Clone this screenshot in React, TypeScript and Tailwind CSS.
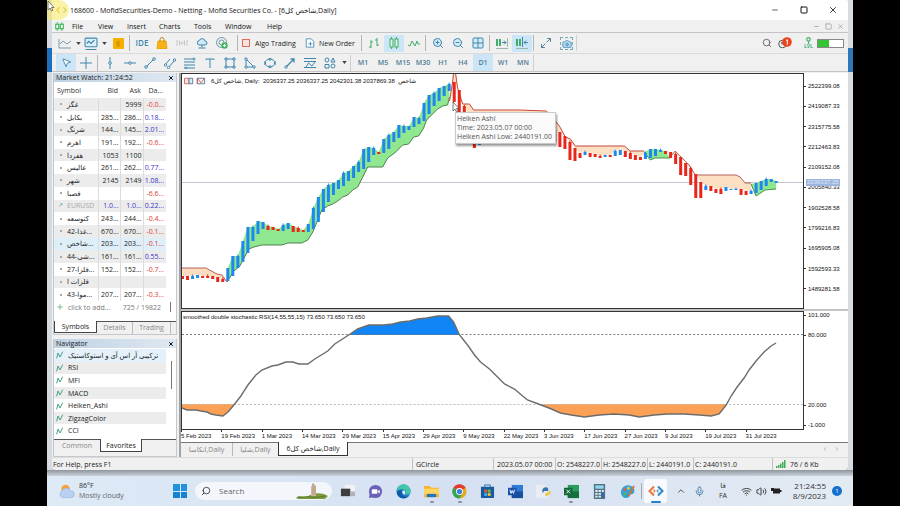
import React from "react";
import {
  Search, Minus, Square, X, ZoomIn, ZoomOut, Maximize2, Camera, Cloud,
  MousePointer2, ChevronUp, ChevronLeft, ChevronRight, Mic, Wifi, Volume2, Plus,
} from "lucide-react";

const BLUE = "#3f86ad";
const GREEN = "#3fae6a";

type Candle = [number, number, "b" | "r"];

const candles: Candle[] = [
  [276, 279, "r"], [276, 280, "r"], [276, 279, "b"], [275, 278, "b"], [276, 278, "r"],
  [276, 278, "r"], [276, 279, "r"], [277, 282, "r"], [279, 282, "r"], [268, 281, "b"],
  [256, 276, "b"], [256, 268, "b"], [241, 262, "b"], [227, 253, "b"], [227, 241, "b"],
  [221, 234, "b"], [222, 229, "b"], [226, 230, "r"], [227, 230, "r"], [229, 231, "r"],
  [225, 231, "b"], [223, 229, "b"], [226, 232, "r"], [228, 232, "r"], [230, 232, "r"],
  [224, 232, "b"], [208, 229, "b"], [197, 222, "b"], [189, 212, "b"], [185, 202, "b"],
  [183, 195, "b"], [180, 189, "b"], [173, 186, "b"], [171, 181, "b"], [166, 178, "b"],
  [162, 172, "b"], [149, 169, "b"], [147, 162, "b"], [148, 155, "b"], [152, 154, "r"],
  [139, 153, "b"], [135, 149, "b"], [132, 142, "b"], [125, 138, "b"], [126, 133, "b"],
  [126, 130, "b"], [117, 127, "b"], [118, 124, "b"], [103, 121, "b"], [95, 114, "b"],
  [93, 106, "b"], [88, 101, "b"], [86, 96, "b"], [84, 91, "b"], [82, 102, "r"],
  [90, 116, "r"], [106, 128, "r"], [116, 138, "r"], [124, 148, "r"], [138, 145, "b"],
  [132, 140, "b"], [130, 138, "b"], [128, 136, "b"], [126, 134, "b"], [125, 132, "b"],
  [124, 130, "b"], [123, 129, "b"], [122, 128, "b"], [122, 127, "b"], [122, 126, "r"],
  [123, 128, "r"], [124, 130, "r"], [126, 132, "r"], [128, 136, "r"], [130, 142, "r"],
  [132, 147, "r"], [136, 149, "r"], [142, 160, "r"], [148, 161, "r"], [153, 158, "r"],
  [152, 155, "b"], [153, 157, "r"], [154, 157, "r"], [156, 158, "r"], [155, 157, "b"],
  [155, 157, "r"], [151, 156, "b"], [150, 155, "b"], [151, 157, "r"], [153, 159, "r"],
  [155, 160, "r"], [157, 160, "r"], [153, 159, "b"], [149, 158, "b"], [149, 156, "b"],
  [150, 152, "b"], [151, 154, "r"], [152, 158, "r"], [154, 164, "r"], [157, 175, "r"],
  [163, 176, "r"], [168, 185, "r"], [174, 198, "r"], [182, 198, "r"], [186, 190, "b"],
  [186, 191, "r"], [189, 193, "r"], [189, 194, "r"], [187, 191, "b"], [189, 190, "b"],
  [189, 190, "b"], [189, 195, "r"], [191, 195, "r"], [191, 194, "b"], [183, 193, "b"],
  [181, 190, "b"], [179, 186, "b"], [179, 182, "b"], [181, 183, "b"],
];

const cx = (i: number) => 182.5 + i * 5.04;

const bands = [
  { from: 0, to: 8, fill: "#fbdcc0", stroke: "#b5605a", line: "182,268 206,268 217,274 222,275 227,282" },
  {
    from: 9, to: 53, fill: "#8fe88f", stroke: "#4d7f4d",
    line: "227,282 234,271 240,266 249,249 254,247 262,245 282,245 288,243 302,243 308,240 313,232 318,220 322,210 328,206 333,204 338,201 343,197 348,195 353,190 358,187 363,177 368,167 383,167 388,158 395,153 403,145 409,144 414,137 419,136 424,128 427,120 433,114 438,109 443,106 448,105 450,97",
  },
  {
    from: 54, to: 92, fill: "#fde0c4", stroke: "#c4473c",
    line: "450,101 453,82 454,73 456,73 458,88 463,104 470,104 474,110 520,110 547,111 556,121 560,126 566,137 571,139 576,146 625,146 631,151 645,151",
  },
  { from: 93, to: 96, fill: "#8fe88f", stroke: "#4d8f4d", line: "645,152 651,160 656,158 671,158" },
  {
    from: 97, to: 113, fill: "#fde0c4", stroke: "#b5605a",
    line: "671,157 676,151 684,159 690,165 696,175 737,175 741,177 746,183 752,183",
  },
  { from: 114, to: 118, fill: "#8fe88f", stroke: "#4d8f4d", line: "752,184 757,196 766,190 777,189" },
];

const candleEdge = (from: number, to: number) =>
  candles
    .slice(from, to + 1)
    .map((c, k) => `${cx(from + k)},${c[0]}`)
    .reverse()
    .join(" ");

function PriceChart() {
  return (
    <svg className="block h-full w-full" viewBox="182 74 622 234" preserveAspectRatio="none" role="img" aria-label="Heiken Ashi price chart">
      <path d="M182 182.5H804" stroke="#c3c6cf" strokeWidth="1" />
      {bands.map((b, i) => (
        <g key={i}>
          <polygon points={`${b.line} ${candleEdge(b.from, b.to)}`} fill={b.fill} />
          <polyline points={b.line} fill="none" stroke={b.stroke} strokeWidth="1" />
        </g>
      ))}
      {candles.map(([top, bottom, c], i) => (
        <g key={i} fill={c === "b" ? "#1e88ee" : "#e8261a"}>
          <rect x={cx(i) - 1.5} y={top} width="3" height={bottom - top} />
          {i % 3 === 2 && <rect x={cx(i) - 0.5} y={top - 1.5} width="1" height="2" />}
        </g>
      ))}
    </svg>
  );
}

const rsi =
  "182,408 187,410 196,410 201,411 207,412 211,414 216,415 223,416 228,412 234,405 241,396 248,385 256,375 262,370 272,366 278,365 286,362 293,362 299,364 308,364 315,359 328,351 335,344 349,335 358,329 369,325 384,325 393,324 401,322 410,321 418,319 427,318 438,316 449,316 454,322 460,335 468,345 475,355 481,362 490,369 497,376 505,384 515,389 522,395 528,400 539,404 552,409 561,413 572,415 585,417 600,415 615,414 630,415 640,417 655,415 668,414 685,414 700,415 712,416 720,414 727,405 732,396 738,387 745,378 750,370 757,361 765,352 772,346 777,343";

function RsiChart() {
  return (
    <svg className="block h-full w-full" viewBox="182 312 622 117" preserveAspectRatio="none" role="img" aria-label="Smoothed double stochastic RSI">
      <defs>
        <clipPath id="over"><rect x="182" y="312" width="622" height="23" /></clipPath>
        <clipPath id="under"><rect x="182" y="404" width="622" height="20" /></clipPath>
      </defs>
      <polygon points={`182,335 182,429 ${rsi} 777,429 182,429`} fill="#1185f5" clipPath="url(#over)" />
      <polygon points={`182,404 ${rsi} 777,320 182,320`} fill="#fba055" clipPath="url(#under)" />
      <path d="M182 334.5H804" stroke="#777" strokeWidth="1" strokeDasharray="2 2" />
      <path d="M182 404.5H804" stroke="#bbb" strokeWidth="1" strokeDasharray="2 2" />
      <polyline points={rsi} fill="none" stroke="#6c6c6c" strokeWidth="1.4" />
    </svg>
  );
}

function Glyph({ children, color = BLUE, size = "h-3 w-3" }: { children: React.ReactNode; color?: string; size?: string }) {
  return (
    <svg viewBox="0 0 12 12" className={`shrink-0 ${size}`} fill="none" stroke={color} strokeWidth="1" aria-hidden="true">
      {children}
    </svg>
  );
}

function Tool({ label, active, children }: { label: string; active?: boolean; children: React.ReactNode }) {
  return (
    <button aria-label={label} className={`flex h-[17px] w-5 shrink-0 items-center justify-center ${active ? "bg-[#cde6f7]" : ""}`}>
      {children}
    </button>
  );
}

const Sep = () => <span className="mx-[1px] h-4 w-[2px] shrink-0 border-l border-[#b4b4b4]" />;
const Caret = () => <svg viewBox="0 0 6 4" className="h-[3px] w-[5px] shrink-0" aria-hidden="true"><path d="M0 0h6L3 4z" fill="#444" /></svg>;

function MainToolbar() {
  return (
    <div className="flex h-5 items-center pl-1">
      <button aria-label="Chart type" className="flex h-4 w-[26px] items-center justify-center gap-1">
        <Glyph size="h-3 w-[14px]"><path d="M0 2v9h12M1 7l3-3 4 3 4-3" stroke="#7c99a8" /></Glyph><Caret />
      </button>
      <button aria-label="Templates" className="flex h-4 w-[26px] items-center justify-center gap-1">
        <Glyph size="h-[13px] w-[14px]"><rect x="0.5" y="1" width="11" height="8" rx="1" fill="#dceefa" /><path d="M2 6l2-2 2 2 3-3M1 11.500h10" /></Glyph><Caret />
      </button>
      <button aria-label="Market" className="flex h-4 w-5 items-center justify-center">
        <span className="flex h-[11px] w-[11px] items-center justify-center rounded-[1px] bg-[#f5b100] text-[8px] leading-none text-[#c07a00]">$</span>
      </button>
      <Sep />
      <button className="h-4 w-5 text-[8px] font-semibold leading-none text-[#3f86ad]">IDE</button>
      <Tool label="Store">
        <Glyph><path d="M2 4h8l1 7.500H1z" fill="#f6b21a" stroke="#f0a500" /><path d="M4 5V2.500a2 2 0 0 1 4 0V5" stroke="#c98a1b" /></Glyph>
      </Tool>
      <Tool label="Signals">
        <Glyph color="#c4c4c4"><circle cx="6" cy="6" r="1" /><path d="M3.500 3.500v5M8.500 3.500v5M1 3v6M11 3v6" /></Glyph>
      </Tool>
      <Tool label="Cloud">
        <Glyph><path d="M3 8a2.300 2.300 0 0 1 .3-4.500A3 3 0 0 1 9 4a2 2 0 0 1 0 4z" fill="#cfe8f7" /><path d="M6 8v2.500M2.500 11h7" /></Glyph>
      </Tool>
      <Tool label="VPS">
        <Glyph color="#6d97a8"><circle cx="5.500" cy="5.500" r="5" /><circle cx="5.500" cy="5.500" r="2.500" /><circle cx="8.500" cy="8.500" r="3.200" fill="#43b75c" stroke="none" /><path d="M7 8.500h3M8.500 7v3" stroke="#fff" /></Glyph>
      </Tool>
      <span className="w-1" /><Sep />
      <button className="flex h-4 w-[64px] items-center gap-[5px] pl-[2px] font-medium">
        <span className="h-2 w-2 border border-[#dc6a5e] bg-[#fbe4e0]" />Algo Trading
      </button>
      <button className="flex h-4 w-[56px] items-center gap-1 pl-[1px] font-medium">
        <Glyph size="h-3 w-[10px]"><path d="M1.500 1h6l3 3v7h-9z" fill="#fff" /><path d="M4 7h5M6.500 4.500v5" /></Glyph>New Order
      </button>
      <Sep />
      <Tool label="Bars"><Glyph color={GREEN}><path d="M3 3v8M1 10h2M3 5h2M9 1v8M7 3h2M9 8h2" /></Glyph></Tool>
      <Tool label="Candles" active><Glyph color={GREEN}><path d="M3.500 0v12M8.500 0v12" /><rect x="2" y="2" width="3" height="8" fill="#dff6e6" /><rect x="7" y="2" width="3" height="8" fill="#dff6e6" /></Glyph></Tool>
      <Tool label="Line"><Glyph color={GREEN}><path d="M0 8l2 1 2-5 3 5 2-5 1 3h2" /></Glyph></Tool>
      <Sep />
      <Tool label="Zoom in"><ZoomIn className="h-3 w-3" stroke={BLUE} fill="#d5ebf8" /></Tool>
      <Tool label="Zoom out"><ZoomOut className="h-3 w-3" stroke={BLUE} fill="#d5ebf8" /></Tool>
      <Tool label="Tile"><Glyph><rect x="1" y="1" width="10" height="10" rx="1" fill="#d5ebf8" /><path d="M6 1v10M1 6h10" /></Glyph></Tool>
      <Sep />
      <Tool label="Auto scroll"><Glyph color={GREEN}><path d="M1 2v7M4 2v7" strokeWidth="2" /><path d="M6 5.500h4M8 3.500l2 2-2 2" stroke={BLUE} /><path d="M11.500 1v9M0 11.500h12" stroke="#9bb8a5" /></Glyph></Tool>
      <Tool label="Chart shift" active><Glyph color={GREEN}><path d="M1 2v7M4 2v7" strokeWidth="2" /><path d="M12 5.500H8M10 3.500l-2 2 2 2M6.500 0v10" stroke={BLUE} /><path d="M0 11.500h12" stroke="#9bb8a5" /></Glyph></Tool>
      <Sep />
      <Tool label="Full screen"><Maximize2 className="h-3 w-3" stroke="#578499" /></Tool>
      <Tool label="Screenshot">
        <span className="flex h-[13px] w-[13px] items-end justify-end border border-dashed border-[#79a7bd]"><Camera className="h-[10px] w-[10px]" stroke={BLUE} fill="#b7ddf2" /></span>
      </Tool>
      <span className="h-4 border-l border-[#cfcfcf]" />
      <div className="ml-auto flex items-center pr-1">
        <button aria-label="Search" className="flex w-[22px] justify-center"><Search className="h-[10px] w-[10px]" stroke="#555" /></button>
        <button aria-label="Account" className="flex w-[22px] items-start">
          <svg viewBox="0 0 14 12" className="h-3 w-[14px]" aria-hidden="true">
            <circle cx="4.500" cy="7" r="3.800" fill="none" stroke="#555" /><circle cx="4.500" cy="6" r="1.500" fill="#777" />
            <circle cx="9" cy="5" r="4.800" fill="#e8471d" /><path d="M8 3.500l1.300-.8v5" stroke="#fff" fill="none" />
          </svg>
        </button>
        <button className="flex w-[17px] flex-col items-center text-[5px] font-bold leading-none text-[#3fae82]">
          <Glyph size="h-[7px] w-[7px]" color={GREEN}><circle cx="6" cy="4" r="3" strokeWidth="2" /><path d="M6 7v5" strokeWidth="2" /></Glyph>LVL
        </button>
        <span className="flex h-[9px] w-[27px] border border-[#888] bg-white"><span className="w-[11px] bg-[#35c435]" /></span>
      </div>
    </div>
  );
}

const drawTools: [string, React.ReactNode][] = [
  ["Vertical line", <><path d="M6 0v12" /><circle cx="6" cy="6" r="1.300" fill="#fff" /></>],
  ["Horizontal line", <><path d="M0 6h12" /><circle cx="6" cy="6" r="1.300" fill="#fff" /></>],
  ["Trend line", <><path d="M2 10l8-8" /><circle cx="2" cy="10" r="1.300" fill="#fff" /><circle cx="10" cy="2" r="1.300" fill="#fff" /></>],
  ["Channel", <><path d="M1 8l5-6M4 11l7-8" /><circle cx="1.500" cy="8" r="1.200" fill="#fff" /><circle cx="10.500" cy="3" r="1.200" fill="#fff" /><circle cx="4.500" cy="10.500" r="1.200" fill="#fff" /></>],
  ["Fibonacci", <><path d="M0 2h11M0 5h11M0 8h11M0 11h11" /><circle cx="2" cy="11" r="1" fill="#fff" /><circle cx="10" cy="2" r="1" fill="#fff" /></>],
  ["Text", <path d="M2 3V2h8v1M6 2v9" />],
  ["Rectangle", <><path d="M2 2h8v8H2z" /><path d="M1 1h2v2H1zM9 1h2v2H9zM1 9h2v2H1zM9 9h2v2H9z" fill="#fff" /></>],
  ["Triangle", <><path d="M2 2v8h8z" /><circle cx="2" cy="2" r="1.200" fill="#fff" /><circle cx="2" cy="10" r="1.200" fill="#fff" /><circle cx="10" cy="10" r="1.200" fill="#fff" /></>],
  ["Ellipse", <><ellipse cx="6" cy="6" rx="5" ry="3.800" /><path d="M5 1.500h2v1.500H5zM5 9h2v1.500H5zM0 5h1.500v2H0zM10.500 5H12v2h-1.500z" fill="#fff" /></>],
  ["Arrow", <><path d="M2 10l8-8M6.500 2H10v3.500" strokeWidth="1.300" /><circle cx="2" cy="10" r="1.200" fill="#fff" /></>],
  ["Label", <><path d="M0 1.500h12M0 4.500h12M0 10.500h12" /><path d="M2 10l2.500-4L8 9l3-4" /></>],
  ["Shapes", <><circle cx="3" cy="3" r="2" /><path d="M9 1l2 4H7zM1 7.500h4v3.500H1z" /><circle cx="9" cy="9" r="2" /></>],
];

const timeframes = ["M1", "M5", "M15", "M30", "H1", "H4", "D1", "W1", "MN"];

function DrawToolbar() {
  return (
    <div className="flex h-[18px] items-center border-t border-[#dadada] pl-1">
      <Tool label="Cursor" active><MousePointer2 className="h-[11px] w-[11px]" stroke={BLUE} fill="#fff" /></Tool>
      <Tool label="Crosshair"><Glyph><path d="M6 0v12M0 6h12" /></Glyph></Tool>
      <Sep />
      {drawTools.map(([name, shape]) => (
        <Tool key={name} label={name}><Glyph>{shape}</Glyph></Tool>
      ))}
      <button aria-label="More shapes" className="flex w-2 justify-center"><Caret /></button>
      <span className="mx-[2px] h-4 border-l border-[#cfcfcf]" />
      {timeframes.map((t) => (
        <button key={t} className={`h-[17px] w-5 text-center font-semibold text-[#4f7d94] ${t === "D1" ? "bg-[#cde6f7]" : ""}`}>{t}</button>
      ))}
      <span className="h-4 border-l border-[#cfcfcf]" />
    </div>
  );
}

const symbols: [string, string, string, string][] = [
  ["غگز", "", "5999", "-0.0..."],
  ["بکابل", "285...", "286...", "0.18..."],
  ["شرنگ", "144...", "145...", "2.01..."],
  ["اهرم", "191...", "192...", "-0.6..."],
  ["هفردا", "1053", "1100", ""],
  ["عالیس", "261...", "262...", "0.77..."],
  ["شهر", "2145", "2149", "1.08..."],
  ["فصبا", "", "", "-6.6..."],
  ["EURUSD", "1.0...", "1.0...", "0.22..."],
  ["کتوسعه", "243...", "244...", "-0.4..."],
  ["غذا-42...", "670...", "670...", "-0.1..."],
  ["شاخص...", "203...", "203...", "-0.1..."],
  ["شی-44...", "161...", "161...", "0.55..."],
  ["فلزا-27...", "152...", "152...", "-0.7..."],
  ["فلزات ا", "", "", ""],
  ["موا-43...", "207...", "207...", "-0.3..."],
];

function PanelTitle({ children }: { children: React.ReactNode }) {
  return (
    <div className="flex h-[9px] items-center justify-between bg-gradient-to-r from-[#bfd2e4] to-[#dfe8f1] px-[2px] text-[#222]">
      <h2>{children}</h2>
      <button aria-label="Close panel"><X className="h-[6px] w-[6px]" stroke="#111" strokeWidth={4} /></button>
    </div>
  );
}

function MarketWatch() {
  return (
    <section className="flex h-[262px] flex-col border border-t-0 border-[#c4c8cc] bg-white">
      <PanelTitle>Market Watch: 21:24:52</PanelTitle>
      <table className="h-[219px] w-[112px] table-fixed border-collapse">
        <thead>
          <tr className="h-4 text-[#333]">
            <th className="w-[44px] pl-[3px] text-left font-normal">Symbol</th>
            <th className="w-[22px] pr-[2px] text-right font-normal">Bid</th>
            <th className="w-[23px] pr-[2px] text-right font-normal">Ask</th>
            <th className="w-[23px] pr-[3px] text-right font-normal">Da...</th>
          </tr>
        </thead>
        <tbody>
          {symbols.map(([name, bid, ask, change], i) => {
            const fx = name === "EURUSD";
            const tone = fx ? "text-[#4038c8]" : "text-[#222]";
            return (
              <tr key={i} className={i === 11 ? "bg-[#dfeffa]" : i % 2 === 0 ? "bg-[#ececec]" : "bg-white"}>
                <td className={`overflow-hidden border-r border-[#dcdcdc] p-0 pl-1 ${fx ? "text-[#a8a8a8]" : "text-[#222]"}`}>
                  <span className="flex items-center gap-1 whitespace-nowrap">
                    {fx ? <span className="w-[5px] text-[6px] text-[#3fa35c]">↗</span> : <span className="flex w-[5px] justify-center"><i className="h-[2px] w-[2px] bg-[#aaa]" /></span>}
                    {name}
                  </span>
                </td>
                <td className={`whitespace-nowrap border-r border-[#dcdcdc] p-0 pr-[1px] text-right ${tone}`}>{bid}</td>
                <td className={`whitespace-nowrap border-r border-[#dcdcdc] p-0 pr-[1px] text-right ${tone}`}>{ask}</td>
                <td className={`whitespace-nowrap p-0 pr-[2px] text-right ${change.startsWith("-") ? "text-[#e0392f]" : "text-[#3a34cc]"}`}>{change}</td>
              </tr>
            );
          })}
        </tbody>
      </table>
      <div className="flex h-3 items-center text-[#777]">
        <Plus className="ml-[2px] h-2 w-2" stroke="#3fa35c" />
        <span className="ml-1">click to add...</span>
        <span className="ml-auto mr-[9px]">725 / 19822</span>
        <span className="mr-[5px] h-[10px] w-[1px] bg-[#777]" />
      </div>
      <div className="mt-auto flex h-[13px] items-start border-t border-[#555] bg-[#f0f0f0] text-[#888]">
        <button className="-mt-px h-3 w-[43px] border border-t-0 border-[#444] bg-white text-[#222]">Symbols</button>
        <button className="h-3 w-9 border-r border-[#bbb] leading-3">Details</button>
        <button className="h-3 w-[38px] border-r border-[#bbb] leading-3">Trading</button>
      </div>
    </section>
  );
}

const indicators = ["ترکیبی آر اس آی و استوکاستیک", "RSI", "MFI", "MACD", "Heiken_Ashi", "ZigzagColor", "CCI"];

function Navigator() {
  return (
    <section className="mt-[4px] flex flex-1 flex-col border border-t-0 border-[#c4c8cc] bg-white">
      <PanelTitle>Navigator</PanelTitle>
      <div className="mt-[1px] flex h-[88px]">
        <ul className="flex w-[112px] flex-col">
          {indicators.map((name, i) => (
            <li key={name} className={`flex flex-1 items-center gap-1 whitespace-nowrap pl-[2px] text-[#222] ${i === 0 ? "bg-[#e4f1fa]" : i % 2 ? "bg-[#ececec]" : "bg-white"}`}>
              <Glyph size="h-2 w-2"><path d="M1 11l2-8 3 6 4-8" stroke="#46a08a" strokeWidth="1.500" /></Glyph>{name}
            </li>
          ))}
        </ul>
        <span className="ml-[5px] mt-3 h-7 w-[1px] bg-[#777]" />
      </div>
      <div className="mt-[2px] flex flex-1 items-start border-t border-[#555] bg-[#f0f0f0] text-[#888]">
        <button className="h-3 w-[46px] leading-3">Common</button>
        <button className="-mt-px h-[13px] w-[42px] border border-t-0 border-[#444] bg-white text-[#222]">Favorites</button>
      </div>
    </section>
  );
}

const prices = ["2522399.08", "2419087.33", "2315775.58", "2212463.83", "2109152.08", "2005840.33", "1902528.58", "1799216.83", "1695905.08", "1592593.33", "1489281.58"];
const dates = ["5 Feb 2023", "19 Feb 2023", "1 Mar 2023", "14 Mar 2023", "29 Mar 2023", "15 Apr 2023", "29 Apr 2023", "9 May 2023", "22 May 2023", "3 Jun 2023", "17 Jun 2023", "27 Jun 2023", "9 Jul 2023", "19 Jul 2023", "31 Jul 2023"];

const AxisLabel = ({ children, className = "" }: { children: React.ReactNode; className?: string }) => (
  <span className={`flex h-2 items-center gap-[2px] ${className}`}><i className="h-[1px] w-[2px] bg-[#333]" />{children}</span>
);

function Pointer({ className }: { className: string }) {
  return (
    <svg viewBox="0 0 8 12" className={className} aria-hidden="true">
      <path d="M1 1v9l2-2 1.500 3 1.300-.6L4.500 7.500H7z" fill="#fff" stroke="#444" strokeWidth=".7" />
    </svg>
  );
}

function ChartWindow() {
  return (
    <main className="flex min-w-0 flex-1 flex-col border-l-2 border-[#9da3a6] bg-[#f0f0f0]">
      <div className="flex flex-col bg-white text-[6px] leading-[8px] text-[#111] [font-family:'Liberation_Sans','DejaVu_Sans',sans-serif]">
        <div className="flex h-[236px]">
          <div className="relative min-w-0 flex-1 border border-[#333]">
            <PriceChart />
            <div className="absolute left-[2px] top-[3px] flex items-center whitespace-pre">
              <svg viewBox="0 0 24 8" className="mr-[5px] h-2 w-[22px]" aria-hidden="true">
                <path d="M.5 1h5v6h-5z" fill="#fbe1dc" stroke="#c66" /><path d="M5.500 1h4v6h-4z" fill="#d7ebf5" stroke="#579" />
                <path d="M14.500 1h8v6h-8z" fill="#eef6fb" stroke="#579" /><path d="M14.500 7V1l4 5 4-5" fill="none" stroke="#d55" />
              </svg>
              شاخص کل6, Daily:  2036337.25 2036337.25 2042301.38 2037869.38  <span>شاخص</span>
            </div>
            <div role="tooltip" className="absolute left-[273px] top-[38px] w-[101px] whitespace-nowrap border border-[#c9c9c9] bg-[#fafafa] px-[1px] pb-[2px] pt-[1px] text-[7px] leading-[9px] text-[#555] shadow-[1px_2px_2px_rgba(0,0,0,0.4)] [font-family:'Open_Sans',sans-serif]">
              Heiken Ashi<br />Time: 2023.05.07 00:00<br />Heiken Ashi Low: 2440191.00
            </div>
            <Pointer className="absolute left-[270px] top-[27px] h-3 w-2" />
          </div>
          <div className="relative flex w-11 flex-col">
            <div className="mt-[3px] flex h-[223px] flex-col">
              {prices.map((p) => <div key={p} className="flex flex-1 items-center"><AxisLabel>{p}</AxisLabel></div>)}
            </div>
            <span className="absolute left-[2px] top-[106px] bg-[#9db6df] px-[1px] leading-[7px] text-[#dfe8f8]">2036337.25</span>
          </div>
        </div>
        <div className="h-[2px] bg-[#c4c4c4]" />
        <div className="flex h-[119px]">
          <div className="relative min-w-0 flex-1 border border-[#333]">
            <RsiChart />
            <span className="absolute left-[1px] top-[1px] whitespace-nowrap">smoothed double stochastic RSI(14,55,55,15) 73.650 73.650 73.650</span>
          </div>
          <div className="flex w-11 flex-col">
            <AxisLabel>101.000</AxisLabel>
            <AxisLabel className="mt-[12px]">80.000</AxisLabel>
            <AxisLabel className="mt-[62px]">20.000</AxisLabel>
            <AxisLabel className="mt-[12px]">-1.000</AxisLabel>
          </div>
        </div>
        <ol className="flex h-3 pr-[62px]">
          {dates.map((d) => (
            <li key={d} className="min-w-0 flex-1 whitespace-nowrap">
              <i className="block h-[2px] border-l border-[#333]" />{d}
            </li>
          ))}
        </ol>
      </div>
      <div className="flex h-[15px] items-start border-t border-[#777] pr-1 text-[#888]">
        <button className="h-[13px] w-[52px] border-r border-[#bbb]">انکاسا,Daily</button>
        <button className="h-[13px] w-[45px]">شلیا,Daily</button>
        <button className="-mt-px h-[14px] w-[70px] border border-t-0 border-[#333] bg-white text-[#222]">شاخص کل6,Daily</button>
        <button aria-label="Previous tab" className="ml-auto flex h-3 w-3 items-center"><ChevronLeft className="h-[6px] w-[6px]" /></button>
        <button aria-label="Next tab" className="flex h-3 w-[10px] items-center"><ChevronRight className="h-[6px] w-[6px]" /></button>
      </div>
    </main>
  );
}

function StatusBar() {
  const cell = "flex h-3 items-center border-l border-[#c0c0c0] whitespace-nowrap";
  return (
    <footer className="flex h-[13px] items-center border-t border-[#dcdcdc] text-[#222]">
      <span className="flex-1 pl-[1px]">For Help, press F1</span>
      <span className={`${cell} w-[81px] pl-[3px]`}>GCircle</span>
      <span className={`${cell} w-[62px] pl-[3px]`}>2023.05.07 00:00</span>
      <span className={`${cell} w-[46px] pl-[1px]`}>O: 2548227.0</span>
      <span className={`${cell} w-[46px] pl-[1px]`}>H: 2548227.0</span>
      <span className={`${cell} w-[46px] pl-[1px]`}>L: 2440191.0</span>
      <span className={`${cell} w-[46px] pl-[1px]`}>C: 2440191.0</span>
      <span className="w-[33px]" />
      <span className={`${cell} w-[76px] gap-1 pl-[3px]`}>
        <svg viewBox="0 0 10 8" className="h-2 w-[10px]" aria-hidden="true"><path d="M0 8V6h1.500v2zM2 8V5h1.500v3zM4 8V3.500h1.500V8zM6 8V2h1.500v6zM8 8V0h1.500v8z" fill="#3fae55" /></svg>
        76 / 6 Kb
      </span>
    </footer>
  );
}

const apps: [string, React.ReactNode][] = [
  ["Task view", <><path d="M5 1h11v11H5z" fill="#f2f2f2" /><path d="M1 5h10v8H1z" fill="#3b3d40" /><path d="M11 8h5v5h-5z" fill="#aeb2b6" /></>],
  ["Chat", <><circle cx="8" cy="8" r="7" fill="#6a62b8" /><path d="M2 10l-1 5 5-1z" fill="#6a62b8" /><rect x="4" y="5.500" width="6" height="5" rx="1" fill="#fff" /><path d="M10.500 7.500l2-1.500v4l-2-1.500z" fill="#fff" /></>],
  ["Edge", <><circle cx="8" cy="8" r="7.500" fill="#1b7fc9" /><path d="M.7 7.500A7.400 7.400 0 0 1 15.500 8c0 3-3 4-5.500 2.800C11.500 8 9.500 5.500 6.500 5.500 3.500 5.500 1.200 6.500.7 7.500z" fill="#43c6a8" /><path d="M6.500 7c-2.500 4 1.500 8 7 6A7.500 7.500 0 0 1 1 10c0-3 3-4 5.500-3z" fill="#0e5aa7" /><path d="M7 7.500c1.500-1.300 3.500 0 2.800 1.800-.4 1-.3 1.500.7 2-2.500.3-4.500-1.800-3.500-3.800z" fill="#e6f2fa" /></>],
  ["Explorer", <><path d="M0 2h6l2 2h8v10H0z" fill="#f5b52e" /><path d="M0 5h16v6H0z" fill="#fcd462" /><path d="M3 10.500h10V14H3z" fill="#2374c0" /></>],
  ["Chrome", <><circle cx="8" cy="8" r="7.500" fill="#e6a91c" /><path d="M8 8L1.500 4A7.500 7.500 0 0 1 14.500 4z" fill="#df3e30" /><path d="M8 8L1.500 4A7.500 7.500 0 0 0 8 15.500l3-5.500z" fill="#35a455" /><circle cx="8" cy="8" r="3.700" fill="#fff" /><circle cx="8" cy="8" r="2.800" fill="#3b7de8" /></>],
  ["Store", <><path d="M5 3V1h6v2" fill="none" stroke="#266fb0" /><path d="M1 3h14v11a1 1 0 0 1-1 1H2a1 1 0 0 1-1-1z" fill="#175c9e" /><path d="M4.500 6h3v3h-3z" fill="#e85a35" /><path d="M8.300 6h3v3h-3z" fill="#7dba3c" /><path d="M4.500 9.700h3v3h-3z" fill="#3bb1e6" /><path d="M8.300 9.700h3v3h-3z" fill="#f6c02d" /></>],
  ["Word", <><path d="M4 1h12v14H4z" fill="#2d7bd4" /><path d="M4 8h12v7H4z" fill="#174f9d" /><path d="M0 4h9v8H0z" fill="#1752a8" /><path d="M2 6l1.200 4L4.500 7l1.300 3L7 6" fill="none" stroke="#fff" /></>],
  ["Python", <><path d="M0 1h9l3 3v11H0z" fill="#e9edf3" /><path d="M10 3.500c3 0 3 1 3 4H8.500l-1 2c-2-2 0-6 2.500-6z" fill="#3b74a8" /><path d="M15 7c2 3-1 5-5 6 0-2-1-4 3-4z" fill="#f2c53c" /></>],
  ["Excel", <><path d="M4 1h12v14H4z" fill="#2a9d5c" /><path d="M4 8h12v7H4z" fill="#14713d" /><path d="M0 4h9v8H0z" fill="#0f6a37" /><path d="M2.500 6l4 4M6.500 6l-4 4" stroke="#fff" /></>],
  ["Calculator", <><path d="M2 0h12v16H2z" fill="#537387" /><path d="M3.500 1.500h9V5h-9z" fill="#91d7f2" /><path d="M3.500 6.500h2.500v2H3.500zM7 6.500h2.500v2H7zM3.500 9.500h2.500v2H3.500zM7 9.500h2.500v2H7zM3.500 12.500h2.500v2H3.500zM7 12.500h2.500v2H7zM10.500 6.500h2v2h-2z" fill="#e6edf1" /><path d="M10.500 9.500h2v5h-2z" fill="#1d6cb5" /></>],
  ["Paint", <><path d="M1 9C1 3 7 0 12 2c5 3 4 9 0 9-3 0-1 4-5 4-4 0-6-3-6-6z" fill="#31a3d8" /><circle cx="5" cy="6" r="1.500" fill="#eb5a3c" /><circle cx="9" cy="4.500" r="1.500" fill="#f5c535" /><circle cx="5" cy="10.500" r="1.500" fill="#5cbb56" /><path d="M15 2l-6 11" stroke="#cf7436" strokeWidth="2" /></>],
];

function Taskbar() {
  return (
    <nav aria-label="Taskbar" className="flex h-[30px] items-center bg-gradient-to-r from-[#dfeaf7] via-[#d5e0f2] to-[#e3ebf2] pl-[11px] pr-[11px] text-[#333]">
      <button className="flex w-[115px] items-center gap-1 text-left leading-[10px]">
        <svg viewBox="0 0 18 16" className="h-4 w-[17px]" aria-hidden="true">
          <circle cx="8" cy="6" r="4.500" fill="#f5a33c" /><path d="M5 15a4 4 0 0 1-.5-7.500A5 5 0 0 1 13.500 8 3.500 3.500 0 0 1 14 15z" fill="#b9d0f1" stroke="#93b2df" strokeWidth=".7" />
        </svg>
        <span>86°F<br /><span className="text-[#666]">Mostly cloudy</span></span>
      </button>
      <button aria-label="Start" className="grid h-[14px] w-[14px] grid-cols-2 gap-[1px]">
        <i className="bg-[#2292dd]" /><i className="bg-[#2292dd]" /><i className="bg-[#1683d2]" /><i className="bg-[#1683d2]" />
      </button>
      <label className="ml-2 flex h-[18px] w-[137px] items-center rounded-full bg-[#f3f6fb] pl-[6px]">
        <Search className="h-[10px] w-[10px] shrink-0 -scale-x-100" stroke="#333" />
        <input aria-label="Search" placeholder="Search" className="ml-2 min-w-0 flex-1 bg-transparent text-[8px] leading-3 outline-none placeholder:text-[#666]" />
        <svg viewBox="0 0 32 18" className="mr-1 h-[18px] w-8" aria-hidden="true">
          <path d="M0 16c4-4 9 1 14-3 6-3 14-2 18 1l-3 3H2z" fill="#7d9a3e" /><path d="M15 14V5l2-4 3 3v10z" fill="#cdb7a0" /><path d="M17 1v12M19 4v9" stroke="#a58770" strokeWidth=".6" /><path d="M2 15c6 1 8-1 12 0s10 0 15-1" stroke="#557b2e" fill="none" />
        </svg>
      </label>
      <div className="ml-[2px] flex w-[307px]">
        {apps.map(([name, art], i) => (
          <button key={name} aria-label={name} className="relative flex flex-1 justify-center">
            <svg viewBox="0 0 16 16" className="h-[15px] w-[15px]" aria-hidden="true">{art}</svg>
            {(i === 3 || i === 4 || i === 8) && <i className="absolute -bottom-[4px] h-[2px] w-1 rounded-full bg-[#8a93a0]" />}
          </button>
        ))}
      </div>
      <span className="h-4 border-l border-[#a9a9a9]" />
      <button aria-label="MetaTrader" className="relative ml-[2px] flex h-6 w-[23px] items-center justify-center rounded-[3px] bg-[#f7f9fc]">
        <svg viewBox="0 0 16 12" className="h-3 w-4" fill="none" strokeWidth="2" aria-hidden="true">
          <path d="M6 1.500L1.500 6 6 10.500" stroke="#e8763c" /><path d="M10 1.500L14.500 6 10 10.500" stroke="#2f86c9" /><path d="M5.500 4.500L7 6 5.500 7.500" stroke="#e87a4a" strokeWidth="1.200" /><path d="M10.500 4.500L9 6l1.500 1.500" stroke="#5a9fd4" strokeWidth="1.200" />
        </svg>
        <i className="absolute bottom-0 h-[2px] w-[10px] rounded-full bg-[#2580c8]" />
      </button>
      <div className="ml-auto flex items-center">
        <button aria-label="Hidden icons" className="w-[18px]"><ChevronUp className="h-[10px] w-[10px]" /></button>
        <button aria-label="Microphone" className="w-[19px]"><Mic className="h-[11px] w-[11px]" stroke="#4a7fae" /></button>
        <button className="ml-[4px] w-[12px] text-center leading-[10px]">فا<br />FA</button>
        <span className="ml-[12px] flex w-[49px] items-center gap-1">
          <Wifi className="h-[11px] w-[11px]" /><Volume2 className="h-[11px] w-[11px]" />
          <svg viewBox="0 0 11 8" className="h-2 w-[11px]" aria-hidden="true"><path d="M2 1.500h7v5H2zM9 3h1.500v2H9zM0 1h3v3H0z" fill="#222" /></svg>
        </span>
        <time className="w-[36px] whitespace-nowrap text-right text-[8px] leading-[10px]">21:24:55<br />8/9/2023</time>
        <button aria-label="1 notification" className="ml-[6px] flex h-[10px] w-[10px] items-center justify-center rounded-full bg-[#1470cc] text-[6px] text-white">1</button>
      </div>
    </nav>
  );
}

const menus: [string, string][] = [
  ["File", "w-[26px]"], ["View", "w-[29px]"], ["Insert", "w-8"], ["Charts", "w-[35px]"],
  ["Tools", "w-[31px]"], ["Window", "w-[42px]"], ["Help", "w-6"],
];

export default function App() {
  return (
    <div className="min-h-screen bg-black px-[47px] text-[7px] leading-[9px] [font-family:'Open_Sans','DejaVu_Sans',sans-serif]">
      <div className="relative flex flex-col bg-[#c3c9cf]">
        <div className="flex">
          <div className="w-[5px] shrink-0 bg-[#d5dae0] pt-12"><div className="h-6 bg-[#1d6fbd]" /></div>
          <div className="flex min-w-0 flex-1 flex-col rounded-b-[4px] bg-[#f0f0f0]">
            <header>
              <div className="flex h-5 items-center rounded-tr-[4px] bg-white pl-1 text-[#111]">
                <svg viewBox="0 0 12 8" className="mr-[3px] h-2 w-[11px]" fill="none" strokeWidth="1.500" aria-hidden="true"><path d="M4 1L1 4l3 3" stroke="#e9a23c" /><path d="M8 1l3 3-3 3" stroke="#a8b86a" /></svg>
                <h1 className="whitespace-nowrap">168600 - MofidSecurities-Demo - Netting - Mofid Securities Co. - [شاخص کل6,Daily]</h1>
                <div className="ml-auto flex items-center pr-[10px]">
                  <button aria-label="Minimize" className="w-[29px]"><Minus className="h-2 w-2" /></button>
                  <button aria-label="Maximize" className="w-[28px]"><Square className="h-2 w-2" strokeWidth={3} /></button>
                  <button aria-label="Close"><X className="h-[10px] w-[10px]" /></button>
                </div>
              </div>
              <nav aria-label="Menu" className="flex h-3 items-center pl-[3px] text-[#111]">
                <Glyph size="mr-2 h-[9px] w-[9px]" color="#35b352"><path d="M3 0v12M9 0v12" /><rect x="1" y="3" width="4" height="6" fill="#fff" strokeWidth="1.500" /><rect x="7" y="3" width="4" height="6" fill="#fff" strokeWidth="1.500" /></Glyph>
                {menus.map(([m, w]) => <button key={m} className={`${w} text-left`}>{m}</button>)}
                <div className="ml-auto flex gap-[5px] pr-1 text-[#888]">
                  <button aria-label="Minimize chart"><Minus className="h-[7px] w-[7px]" /></button>
                  <button aria-label="Restore chart"><Square className="h-[7px] w-[7px]" /></button>
                  <button aria-label="Close chart"><X className="h-[7px] w-[7px]" /></button>
                </div>
              </nav>
              <div className="border-y border-[#c4c4c4] text-[#222]">
                <MainToolbar />
                <DrawToolbar />
              </div>
            </header>
            <div className="flex pt-[1px]">
              <aside className="flex w-[127px] shrink-0 flex-col pl-[1px] pr-[2px]">
                <MarketWatch />
                <Navigator />
              </aside>
              <ChartWindow />
            </div>
            <StatusBar />
          </div>
          <div className="w-[5px] shrink-0 bg-[#d9dcdf] pt-12"><div className="h-6 bg-[#2f78b8]" /></div>
        </div>
        <div className="h-[6px] bg-gradient-to-b from-[#8f959b] to-[#c9d2dc]" />
        <Taskbar />
        <div className="absolute left-0 top-0 h-5 w-[22px] rounded-br-full rounded-tr-full bg-[#f7ea6a]/60" />
        <Pointer className="absolute left-0 top-0 h-3 w-2" />
      </div>
    </div>
  );
}
